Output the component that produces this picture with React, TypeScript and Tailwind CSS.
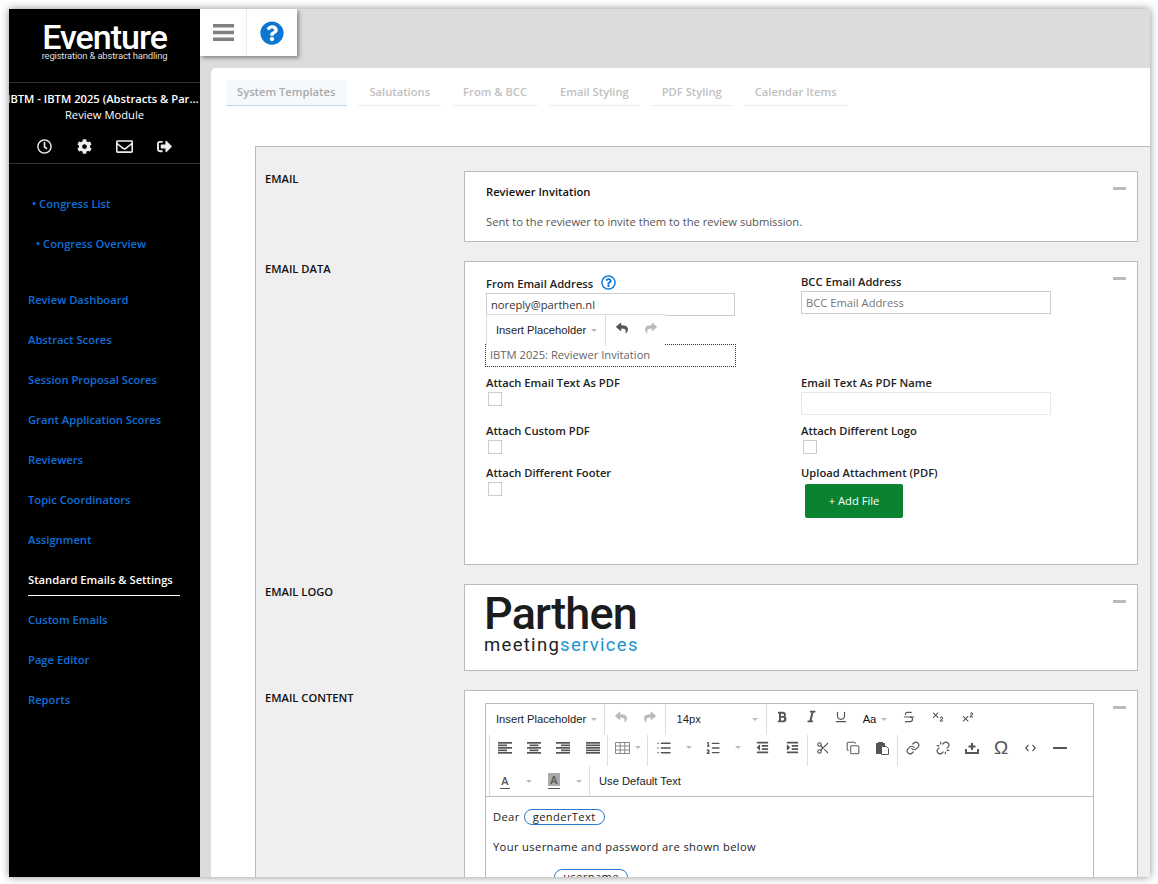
import { ReactNode } from 'react';
import {
  FaBold,
  FaCog,
  FaIndent,
  FaItalic,
  FaOutdent,
  FaQuestionCircle,
  FaRegClock,
  FaRegEnvelope,
  FaRegQuestionCircle,
  FaReply,
  FaShare,
  FaSignOutAlt,
} from 'react-icons/fa';
import {
  Copy,
  Link,
  List,
  ListOrdered,
  Scissors,
  Strikethrough,
  Subscript,
  Superscript,
  Underline,
  Unlink,
} from 'lucide-react';

const navItems = [
  'Review Dashboard',
  'Abstract Scores',
  'Session Proposal Scores',
  'Grant Application Scores',
  'Reviewers',
  'Topic Coordinators',
  'Assignment',
  'Standard Emails & Settings',
  'Custom Emails',
  'Page Editor',
  'Reports',
];

const tabs = ['Salutations', 'From & BCC', 'Email Styling', 'PDF Styling', 'Calendar Items'];

function Caret() {
  return <span className="ml-[5px] h-0 w-0 border-x-[3px] border-t-[3px] border-x-transparent border-t-[#bbbbbb]" />;
}

function Sep() {
  return <span className="mr-[1px] h-full w-px shrink-0 bg-[#dddddd]" />;
}

function Btn({ children, caret, flat, w = 'w-[29.3px]' }: { children: ReactNode; caret?: boolean; flat?: boolean; w?: string }) {
  return (
    <span className={`flex h-full shrink-0 items-center justify-center text-[#555555] ${flat ? '' : 'pb-[6px]'} ${w}`}>
      {children}
      {caret && <Caret />}
    </span>
  );
}

function AlignIcon({ type }: { type: 'left' | 'center' | 'right' | 'justify' }) {
  const long = 14;
  const short = type === 'justify' ? 14 : 9;
  const x = (len: number) => (type === 'left' || type === 'justify' ? 0 : type === 'right' ? 14 - len : (14 - len) / 2);
  return (
    <svg width="14" height="12" viewBox="0 0 14 12" fill="#555555">
      <rect x={x(long)} y="0" width={long} height="1.7" />
      <rect x={x(short)} y="2.5" width={short} height="1.7" />
      <rect x={x(long)} y="5" width={long} height="1.7" />
      <rect x={x(short)} y="7.5" width={short} height="1.7" />
      <rect x={x(long)} y="10" width={long} height="1.7" />
    </svg>
  );
}

function Label({ children }: { children: ReactNode }) {
  return <div className="text-[11.2px] leading-[15px] font-semibold text-[#222222]">{children}</div>;
}

function Check() {
  return <div className="mt-[2px] ml-[2px] h-[14px] w-[14px] border border-[#cccccc] bg-white" />;
}

function Collapse() {
  return <span className="absolute top-[15px] right-[11px] h-[3px] w-[13px] bg-[#bbbbbb]" />;
}

function Row({ label, children }: { label: string; children: ReactNode }) {
  return (
    <div className="flex">
      <div className="w-[208px] shrink-0 pl-[9px] text-[11.2px] leading-[15px] font-semibold text-[#111111]">{label}</div>
      <div className="relative min-w-0 flex-1">{children}</div>
    </div>
  );
}

function UndoRedo({ enabled }: { enabled?: boolean }) {
  return (
    <>
      <Btn>
        <FaReply className={enabled ? 'text-[#555555]' : 'text-[#bbbbbb]'} size={12} />
      </Btn>
      <Btn>
        <FaShare className="text-[#bbbbbb]" size={12} />
      </Btn>
    </>
  );
}

function Editor() {
  return (
    <div className="h-[300px] w-[609px] border border-[#bbbbbb] bg-white">
      <div className="flex h-[93px] flex-col border-b border-[#bbbbbb]">
        <div className="flex h-[31px] items-stretch">
          <span className="flex w-[118px] shrink-0 items-center pl-[10px] font-['Liberation_Sans',sans-serif] text-[11.2px] text-[#222222]">
            Insert Placeholder
            <Caret />
          </span>
          <Sep />
          <UndoRedo />
          <Sep />
          <span className="flex w-[99px] shrink-0 items-center justify-between pr-[8px] pl-[10px] font-['Liberation_Sans',sans-serif] text-[11.2px] text-[#222222]">
            14px
            <Caret />
          </span>
          <Sep />
          <Btn><FaBold size={12} /></Btn>
          <Btn><FaItalic size={13} /></Btn>
          <Btn><Underline size={14} strokeWidth={2} /></Btn>
          <Btn flat caret w="w-[39px]"><span className="font-['Liberation_Sans',sans-serif] text-[11.2px] text-[#111111]">Aa</span></Btn>
          <Btn><Strikethrough size={14} strokeWidth={1.9} /></Btn>
          <Btn><Subscript size={14} strokeWidth={1.75} /></Btn>
          <Btn><Superscript size={14} strokeWidth={1.75} /></Btn>
        </div>
        <div className="flex h-[31px] items-stretch pl-[3px]">
          <span className="h-full w-px shrink-0 bg-[#dddddd]" />
          <Btn><AlignIcon type="left" /></Btn>
          <Btn><AlignIcon type="center" /></Btn>
          <Btn><AlignIcon type="right" /></Btn>
          <Btn><AlignIcon type="justify" /></Btn>
          <Sep />
          <Btn caret w="w-[38px]">
            <svg width="15" height="12" viewBox="0 0 15 12" fill="none" stroke="#888888" strokeWidth="1">
              <path d="M.5.5h14v11H.5zM.5 4h14M.5 8h14M5.2.5v11M9.8.5v11" />
            </svg>
          </Btn>
          <Sep />
          <Btn w="w-[49px]">
            <span className="mr-[9px]"><List size={16} strokeWidth={2.25} /></span>
            <Caret />
          </Btn>
          <Btn w="w-[50px]">
            <span className="mr-[9px]"><ListOrdered size={16} strokeWidth={2} /></span>
            <Caret />
          </Btn>
          <Btn><FaOutdent size={13} /></Btn>
          <Btn><FaIndent size={13} /></Btn>
          <Sep />
          <Btn><Scissors size={14} strokeWidth={2} /></Btn>
          <Btn><Copy size={14} strokeWidth={1.75} /></Btn>
          <Btn>
            <svg width="14" height="14" viewBox="0 0 14 14">
              <path d="M1 2h2V1h5v1h2v3H6v8H1z" fill="#555555" />
              <path d="M6.5 5.500h5l2 2v6h-7z" fill="#ffffff" stroke="#555555" />
            </svg>
          </Btn>
          <Sep />
          <Btn><Link size={14} strokeWidth={2} /></Btn>
          <Btn><Unlink size={14} strokeWidth={2} /></Btn>
          <Btn>
            <svg width="14" height="13" viewBox="0 0 14 13" fill="#555555">
              <path d="M6 2h2v2.500h2.500v2H8V9H6V6.500H3.500v-2H6z" />
              <path d="M0 8h2v3h10V8h2v5H0z" />
            </svg>
          </Btn>
          <Btn><span className="font-['Liberation_Sans',sans-serif] text-[19px] leading-none">Ω</span></Btn>
          <Btn>
            <svg width="11" height="8" viewBox="0 0 11 8" fill="none" stroke="#555555" strokeWidth="1.2">
              <path d="M3.500.8.8 4l2.700 3.200M7.500.8 10.200 4 7.500 7.200" />
            </svg>
          </Btn>
          <Btn><span className="h-[2px] w-[14px] bg-[#555555]" /></Btn>
        </div>
        <div className="flex h-[30px] items-stretch pl-[3px]">
          <Sep />
          <Btn flat w="w-[50px]">
            <span className="mr-[11px] flex flex-col items-center border-b border-[#555555] px-[1px] pb-[1px] text-[11px] leading-[13px] font-semibold text-[#555555]">A</span>
            <Caret />
          </Btn>
          <Btn flat w="w-[48px]">
            <span className="mr-[11px] flex flex-col items-center border-b border-[#555555] pb-[2px]">
              <span className="bg-[#aaaaaa] px-[2px] text-[11px] leading-[13px] font-semibold text-[#555555]">A</span>
            </span>
            <Caret />
          </Btn>
          <Sep />
          <span className="flex items-center pl-[8px] font-['Liberation_Sans',sans-serif] text-[11.2px] text-[#222222]">Use Default Text</span>
        </div>
      </div>
      <div className="px-[7px] pt-[12px] text-[11.2px] tracking-[0.36px] text-[#222222]">
        <div className="flex h-[16px] items-center">
          Dear
          <span className="ml-[4px] flex h-[16px] w-[81px] items-center justify-center rounded-full border border-[#2b79cf]">genderText</span>
        </div>
        <div className="mt-[14px] h-[16px] leading-[16px]">Your username and password are shown below</div>
        <div className="mt-[14px] ml-[61px] flex h-[16px] w-[74px] items-center justify-center rounded-full border border-[#2b79cf]">username</div>
      </div>
    </div>
  );
}

export default function App() {
  return (
    <div className="h-screen overflow-hidden bg-white pt-[9px] pr-[8px] pb-[7px] pl-[9px] font-['Open_Sans',sans-serif]">
      <div className="flex h-full overflow-hidden bg-[#dcdcdc] shadow-[0_0_8px_rgba(0,0,0,0.45)]">
        <aside className="flex w-[191px] shrink-0 flex-col overflow-hidden bg-black text-white">
          <div className="flex h-[74px] flex-col items-center border-b border-[#333333] pt-[15px]">
            <div className="font-['Roboto',sans-serif] text-[34px] leading-[27px] font-medium tracking-[-1px]">Eventure</div>
            <div className="font-['Roboto',sans-serif] text-[9.5px] leading-[10px] tracking-[-0.2px] text-[#dddddd]">
              registration &amp; abstract handling
            </div>
          </div>
          <div className="flex h-[81px] flex-col border-b border-[#333333]">
            <div className="mt-[8px] -ml-[2px] w-[193px] truncate text-center text-[11.2px] leading-[16px] font-semibold">IBTM - IBTM 2025 (Abstracts &amp; Participants)</div>
            <div className="text-center text-[11.2px] leading-[16px]">Review Module</div>
            <div className="mt-[15px] flex items-center justify-center pr-[1px] text-[#eeeeee]">
              <span className="flex w-[40px] justify-center"><FaRegClock size={15} /></span>
              <span className="flex w-[40px] justify-center"><FaCog size={15} /></span>
              <span className="flex w-[40px] justify-center"><FaRegEnvelope size={17} /></span>
              <span className="flex w-[40px] justify-center"><FaSignOutAlt size={15} /></span>
            </div>
          </div>
          <nav className="pt-[20px] text-[11.2px] font-semibold text-[#0f6fd8]">
            <div className="flex h-[40px] items-center pl-[23px]">• Congress List</div>
            <div className="flex h-[40px] items-center pl-[27px]">• Congress Overview</div>
            <div className="h-[16px]" />
            {navItems.map((item) => {
              const active = item === 'Standard Emails & Settings';
              return active ? (
                <div key={item} className="h-[40px] pt-[12px] pl-[19px]">
                  <div className="w-[152px] border-b border-white pb-[8px] leading-[15px] text-white">{item}</div>
                </div>
              ) : (
                <div key={item} className="flex h-[40px] items-center pl-[19px]">{item}</div>
              );
            })}
          </nav>
        </aside>

        <main className="flex min-w-0 flex-1 flex-col">
          <div className="flex h-[47px] w-[97px] shrink-0 bg-white shadow-[2px_2px_4px_rgba(0,0,0,0.4)]">
            <div className="flex w-[47px] items-center justify-center border-r border-[#eeeeee]">
              <svg width="21" height="17" viewBox="0 0 21 17" fill="#808080">
                <rect width="21" height="3.500" />
                <rect y="6.750" width="21" height="3.500" />
                <rect y="13.500" width="21" height="3.500" />
              </svg>
            </div>
            <div className="flex flex-1 items-center justify-center text-[#0b77d1]">
              <FaQuestionCircle size={24} />
            </div>
          </div>

          <div className="mt-[12px] ml-[11px] flex-1 overflow-hidden rounded-tl-[5px] bg-white">
            <div className="flex gap-[11px] pt-[12px] pl-[15px] text-[11.2px] font-semibold text-[#c0c0c0]">
              <div className="flex h-[26px] items-center border-b border-[#bcd6ee] bg-[#f6f9fc] pr-[12px] pl-[11px] text-[#a8a8a8]">System Templates</div>
              {tabs.map((t) => (
                <div key={t} className="flex h-[26px] items-center border-b border-[#eeeeee] px-[11px]">
                  {t}
                </div>
              ))}
            </div>

            <div className="mt-[40px] ml-[44px] flex flex-col gap-[19px] border-t border-l border-[#bbbbbb] bg-[#efefef] pt-[24px] pr-[12px]">
              <Row label="EMAIL">
                <div className="relative h-[71px] border border-[#bbbbbb] bg-white pt-[12px] pl-[21px]">
                  <div className="text-[11.2px] leading-[15px] font-semibold text-[#111111]">Reviewer Invitation</div>
                  <div className="mt-[15px] text-[11.2px] leading-[15px] text-[#555555]">Sent to the reviewer to invite them to the review submission.</div>
                  <Collapse />
                </div>
              </Row>

              <Row label="EMAIL DATA">
                <div className="relative flex h-[304px] border border-[#bbbbbb] bg-white pl-[21px]">
                  <div className="relative w-[315px] shrink-0 pt-[14px]">
                    <div className="flex h-[15px] items-center">
                      <Label>From Email Address</Label>
                      <FaRegQuestionCircle className="mb-[3px] ml-[8px] text-[#0b77d1]" size={15} />
                    </div>
                    <div className="mt-[2px] flex h-[23px] w-[249px] items-center border border-[#cccccc] pt-[1px] pl-[4px] text-[11.2px] text-[#333333]">noreply@parthen.nl</div>
                    <div className="absolute top-[52px] left-0 z-10 flex h-[32px] w-[179px] items-stretch border-t border-l border-[#dddddd] bg-white">
                      <span className="flex w-[118px] shrink-0 items-center pl-[9px] font-['Liberation_Sans',sans-serif] text-[11.2px] text-[#222222]">
                        Insert Placeholder
                        <Caret />
                      </span>
                      <Sep />
                      <UndoRedo enabled />
                    </div>
                    <div className="mt-[28px] -ml-[1px] flex h-[23px] w-[251px] items-center border border-dotted border-[#333333] pl-[4px] text-[11.2px] text-[#666666]">IBTM 2025: Reviewer Invitation</div>
                    <div className="mt-[8px]"><Label>Attach Email Text As PDF</Label></div>
                    <Check />
                    <div className="mt-[17px]"><Label>Attach Custom PDF</Label></div>
                    <Check />
                    <div className="mt-[11px]"><Label>Attach Different Footer</Label></div>
                    <Check />
                  </div>
                  <div className="w-[250px] shrink-0 pt-[12px]">
                    <Label>BCC Email Address</Label>
                    <div className="mt-[2px] flex h-[23px] w-[250px] items-center border border-[#cccccc] pt-[1px] pl-[4px] text-[11.2px] text-[#777777]">BCC Email Address</div>
                    <div className="mt-[61px]"><Label>Email Text As PDF Name</Label></div>
                    <div className="mt-[2px] h-[23px] w-[250px] border border-[#e8e8e8]" />
                    <div className="mt-[8px]"><Label>Attach Different Logo</Label></div>
                    <Check />
                    <div className="mt-[11px]"><Label>Upload Attachment (PDF)</Label></div>
                    <button className="mt-[4px] ml-[4px] flex h-[34px] w-[98px] items-center justify-center rounded-[2px] bg-[#0a8230] text-[11.2px] text-white">+ Add File</button>
                  </div>
                  <Collapse />
                </div>
              </Row>

              <Row label="EMAIL LOGO">
                <div className="relative h-[87px] border border-[#bbbbbb] bg-white pt-[8px] pl-[19px]">
                  <div className="font-['Roboto',sans-serif] text-[45px] leading-[42px] font-medium tracking-[-0.85px] text-[#1c1c1c]">Parthen</div>
                  <div className="font-['Roboto',sans-serif] text-[18.5px] leading-[20px] tracking-[1.3px] text-[#222222]">
                    meeting<span className="text-[#1b93cf]">services</span>
                  </div>
                  <Collapse />
                </div>
              </Row>

              <Row label="EMAIL CONTENT">
                <div className="relative h-[300px] border border-[#bbbbbb] bg-white pt-[12px] pl-[20px]">
                  <Editor />
                  <Collapse />
                </div>
              </Row>
            </div>
          </div>
        </main>
      </div>
    </div>
  );
}
